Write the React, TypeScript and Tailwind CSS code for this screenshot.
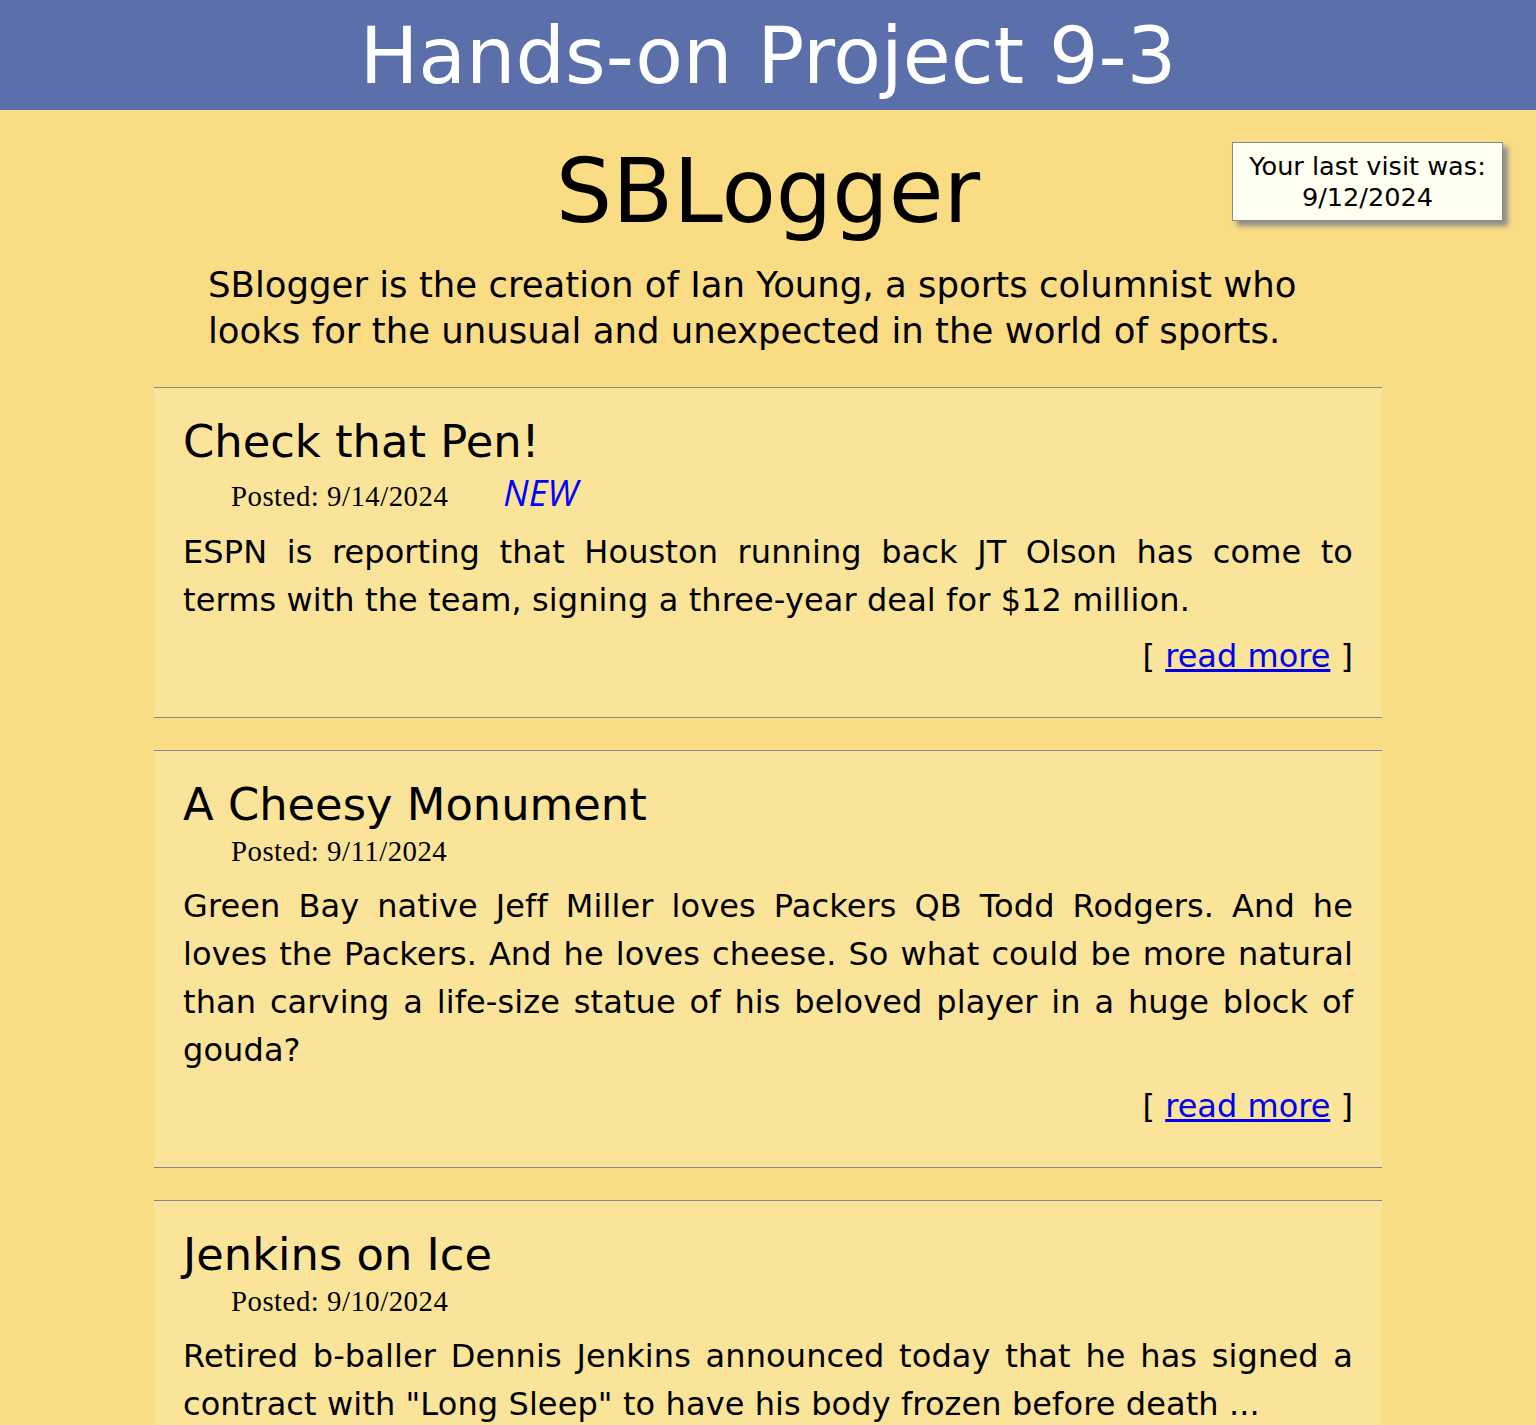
const posts = [
  {
    title: 'Check that Pen!',
    date: '9/14/2024',
    isNew: true,
    body: 'ESPN is reporting that Houston running back JT Olson has come to terms with the team, signing a three-year deal for $12 million.',
  },
  {
    title: 'A Cheesy Monument',
    date: '9/11/2024',
    isNew: false,
    body: 'Green Bay native Jeff Miller loves Packers QB Todd Rodgers. And he loves the Packers. And he loves cheese. So what could be more natural than carving a life-size statue of his beloved player in a huge block of gouda?',
  },
  {
    title: 'Jenkins on Ice',
    date: '9/10/2024',
    isNew: false,
    body: 'Retired b-baller Dennis Jenkins announced today that he has signed a contract with "Long Sleep" to have his body frozen before death ...',
  },
];

export default function App() {
  return (
    <div className="min-h-screen bg-[#fadc84] font-['DejaVu_Sans',sans-serif] text-black">
      <header className="h-[110px] overflow-hidden bg-[#5b70ab] text-center">
        <h1 className="text-[78px] leading-[112px] text-white">Hands-on Project 9-3</h1>
      </header>

      <div className="relative">
        <div className="absolute right-[33px] top-[32px] w-[271px] border border-[#8a8a8a] bg-[#fffff2] pt-[8px] pb-[7px] text-center text-[25.6px] leading-[31px] shadow-[5px_5px_5px_#8c8c8c]">
          Your last visit was:
          <br />
          9/12/2024
        </div>

        <h2 className="pt-[28px] text-center text-[89px] leading-[107px]">SBLogger</h2>
        <p className="mt-[17px] px-[208px] text-[35.5px] leading-[46px]">
          SBlogger is the creation of Ian Young, a sports columnist who looks for the unusual and unexpected in the world of sports.
        </p>

        <section className="mx-[154px] mt-[33px] flex flex-col gap-[32px] pb-10">
          {posts.map((post) => (
            <article
              key={post.title}
              className="border-y border-[#888888] bg-[#fae499] px-[29px] pt-[27px] pb-[37px]"
            >
              <h3 className="text-[44.8px] leading-[54px]">{post.title}</h3>
              <div className="pl-[48px] font-['Liberation_Serif',serif] text-[28.8px] leading-[38px] tracking-[0.5px]">
                Posted: {post.date}
                {post.isNew && (
                  <span className="ml-[55px] font-['Open_Sans',sans-serif] text-[36px] leading-[47px] italic tracking-normal text-[#0000ff]">
                    NEW
                  </span>
                )}
              </div>
              <p className="mt-[12px] text-justify text-[32px] leading-[48px] tracking-[0.1px]">{post.body}</p>
              <div className="mt-[8px] text-right text-[32px] leading-[48px]">
                [ <a href="#" className="text-[#0000ee] underline">read more</a> ]
              </div>
            </article>
          ))}
        </section>
      </div>
    </div>
  );
}
